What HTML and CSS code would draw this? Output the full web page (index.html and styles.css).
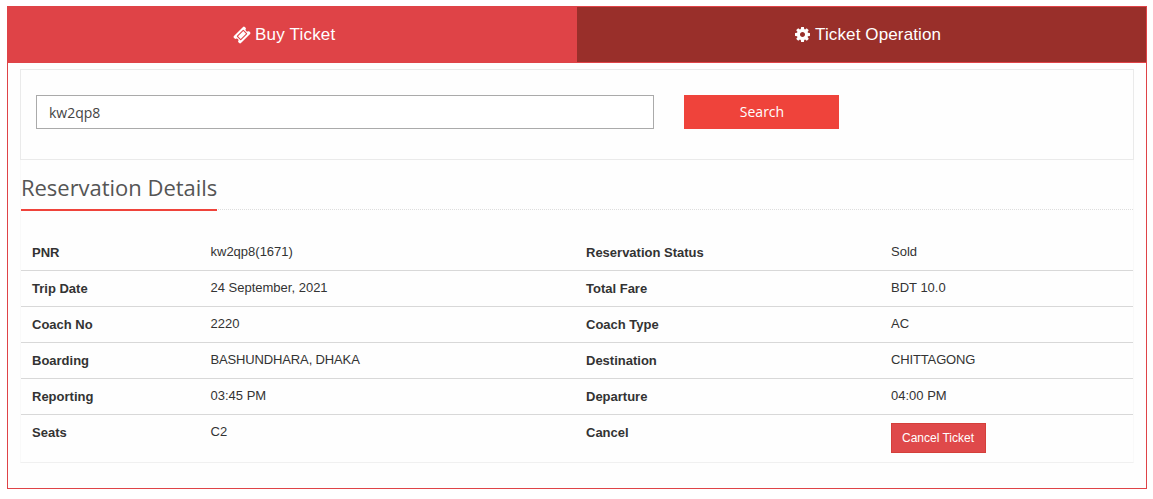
FILE: index.html
```html
<!DOCTYPE html>
<html lang="en">
<head>
<meta charset="utf-8">
<title>Ticket Operation</title>
<link rel="stylesheet" href="styles.css">
</head>
<body>
<main class="box">
  <nav class="tabs">
    <a class="tab tab-buy"><svg class="icon icon-ticket" viewBox="0 0 1792 1792"><path fill="currentColor" d="M1024 500l268 268-524 524-268-268zM813 1391l578-578q19-19 19-45t-19-45l-322-322q-18-18-45-18t-45 18l-578 578q-19 19-19 45t19 45l322 322q18 18 45 18t45-18zM1702 794l-907 908q-37 37-90.500 37t-90.500-37l-126-126q56-56 56-136t-56-136-136-56-136 56l-125-126q-37-37-37-90.500t37-90.500l907-906q37-37 90.500-37t90.500 37l125 125q-56 56-56 136t56 136 136 56 136-56l126 125q37 37 37 90.500t-37 90.500z"/></svg><span class="buy-label">Buy Ticket</span></a>
    <a class="tab tab-operation"><svg class="icon icon-cog" viewBox="0 0 1536 1536"><path fill="currentColor" d="M1024 768q0-106-75-181t-181-75-181 75-75 181 75 181 181 75 181-75 75-181zm512-109v222q0 12-8 23t-20 13l-185 28q-19 54-39 91 35 50 107 138 10 12 10 25t-9 23q-27 37-99 108t-94 71q-12 0-26-9l-138-108q-44 23-91 38-16 136-29 186-7 28-36 28H657q-14 0-24.500-8.500T621 1506l-28-184q-49-16-90-37l-141 107q-10 9-25 9-14 0-25-11-126-114-165-168-7-10-7-23 0-12 8-23 15-21 51-66.500t54-70.500q-27-50-41-99L29 913q-13-2-21-12.500T0 877V655q0-12 8-23t19-13l186-28q14-46 39-92-40-57-107-138-10-12-10-24 0-10 9-23 26-36 98.500-107.500T337 135q13 0 26 10l138 107q44-23 91-38 16-136 29-186 7-28 36-28h222q14 0 24.500 8.500T915 30l28 184q49 16 90 37l142-107q9-9 24-9 13 0 25 10 129 119 165 170 7 8 7 22 0 12-8 23-15 21-51 66.500t-54 70.500q26 50 41 98l183 28q13 2 21 12.500t8 23.500z"/></svg><span class="operation-label">Ticket Operation</span></a>
  </nav>
  <form class="search">
    <input class="pnr-input" type="text" value="kw2qp8">
    <button class="search-button" type="button">Search</button>
  </form>
  <section class="details">
    <div class="heading"><h2 class="heading-text">Reservation Details</h2></div>
    <dl class="rows">
      <div class="row"><dt>PNR</dt><dd>kw2qp8(1671)</dd><dt>Reservation Status</dt><dd>Sold</dd></div>
      <div class="row"><dt>Trip Date</dt><dd>24 September, 2021</dd><dt>Total Fare</dt><dd>BDT 10.0</dd></div>
      <div class="row"><dt>Coach No</dt><dd>2220</dd><dt>Coach Type</dt><dd>AC</dd></div>
      <div class="row"><dt>Boarding</dt><dd class="place">BASHUNDHARA, DHAKA</dd><dt>Destination</dt><dd class="place">CHITTAGONG</dd></div>
      <div class="row"><dt>Reporting</dt><dd>03:45 PM</dd><dt>Departure</dt><dd>04:00 PM</dd></div>
      <div class="row row-last"><dt>Seats</dt><dd>C2</dd><dt>Cancel</dt><dd class="action"><button class="cancel-button" type="button">Cancel Ticket</button></dd></div>
    </dl>
  </section>
</main>
</body>
</html>
```
FILE: styles.css
```css
* { box-sizing: border-box; }
body {
  margin: 0;
  padding: 6px 6px 0 7px;
  background: #fff;
  color: #333;
  font-family: "Liberation Sans", Arial, sans-serif;
  font-size: 13px;
}
.box { height: 483px; border: 1px solid #df4347; background: #fefefe; }
.tabs {
  display: grid;
  grid-template-columns: 569px 1fr;
  height: 56px;
  border-bottom: 1px solid #df4347;
}
.tab {
  display: flex;
  align-items: center;
  color: #fff;
  font-size: 17px;
  white-space: nowrap;
}
.tab-buy { gap: 4px; padding-left: 225px; background: #df4347; }
.tab-operation { gap: 5px; padding-left: 218px; background: #992f2a; }
.buy-label { letter-spacing: 0.2px; }
.operation-label { letter-spacing: 0.13px; }
.icon { display: block; flex: none; }
.icon-ticket { width: 18px; height: 18px; }
.icon-cog { width: 15px; height: 15px; }
.search {
  display: flex;
  gap: 30px;
  height: 91px;
  margin: 6px 12px 0;
  padding: 25px 15px;
  border: 1px solid #eaeaea;
}
.pnr-input {
  width: 618px;
  height: 34px;
  padding: 0 11px 0 12px;
  border: 1px solid #aaa;
  background: #fff;
  color: #444;
  font: 14px "Open Sans", sans-serif;
}
.search-button {
  width: 155px;
  height: 34px;
  padding: 0 0 2px 1px;
  border: 0;
  background: #ef433b;
  color: #fff;
  font: 14px "Open Sans", sans-serif;
}
.details {
  height: 303px;
  margin: 0 12px;
  border: 1px solid #f9f9f9;
  border-top: 0;
  border-bottom-color: #f0f0f0;
}
.heading { height: 50px; border-bottom: 1px dotted #ddd; }
.heading-text {
  display: inline-block;
  width: 196px;
  height: 51px;
  margin: 0;
  border-bottom: 2px solid #ef433b;
  color: #555;
  font: 22px/54px "Open Sans", sans-serif;
  letter-spacing: -0.03px;
  white-space: nowrap;
}
.rows { margin: 25px 0 0; }
.row {
  display: grid;
  grid-template-columns: 178.500px 375.500px 305px 1fr;
  height: 36px;
  padding: 8px 0 0 11px;
  border-bottom: 1px solid #d8d8d8;
}
.row-last { height: 47px; border-bottom: 0; }
.row dt { font-weight: bold; line-height: 20px; }
.row dd { margin: 0; line-height: 18px; }
.row .place { letter-spacing: -0.14px; }
.cancel-button {
  display: block;
  width: 95px;
  height: 30px;
  padding: 0 1px 0 0;
  border: 1px solid #d43f3a;
  background: #df494a;
  color: #fff;
  font: 12px "Liberation Sans", Arial, sans-serif;
}
```
